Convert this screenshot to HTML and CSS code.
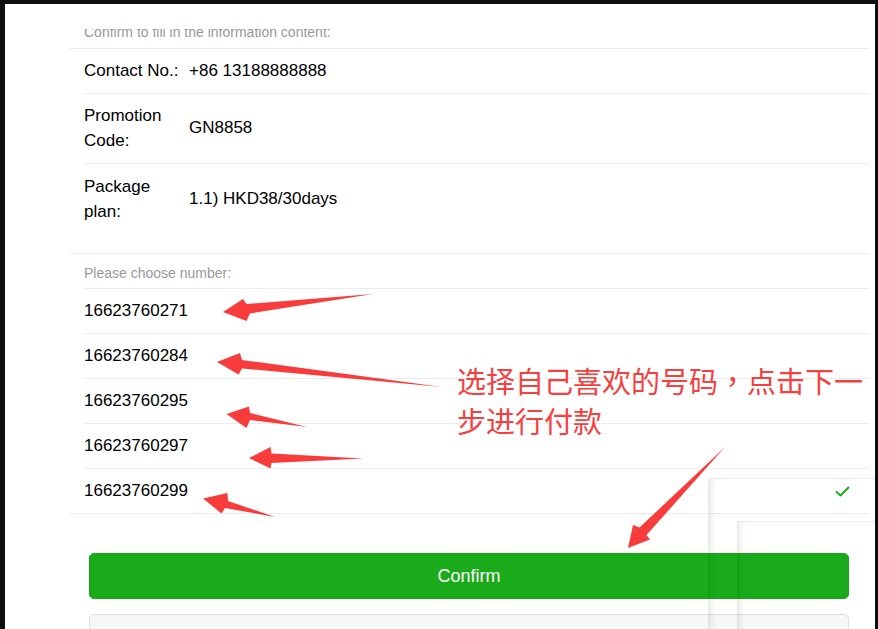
FILE: index.html
```html
<!DOCTYPE html>
<html lang="en">
<head>
<meta charset="utf-8">
<title>Confirm</title>
<link rel="stylesheet" href="styles.css">
</head>
<body>
<div class="page">
  <div class="form">
    <div class="head-clip"><p class="head-title">Confirm to fill in the information content:</p></div>
    <div class="cells">
      <div class="cell"><div class="label">Contact No.:</div><div class="value">+86 13188888888</div></div>
      <div class="cell cell-multi"><div class="label">Promotion Code:</div><div class="value">GN8858</div></div>
      <div class="cell cell-multi cell-tall"><div class="label">Package plan:</div><div class="value">1.1) HKD38/30days</div></div>
    </div>
    <p class="cells-title">Please choose number:</p>
    <div class="cells cells-open">
      <div class="cell"><div class="value">16623760271</div></div>
      <div class="cell"><div class="value">16623760284</div></div>
      <div class="cell"><div class="value">16623760295</div></div>
      <div class="cell"><div class="value">16623760297</div></div>
      <div class="cell"><div class="value">16623760299</div></div>
    </div>
    <div class="btn-area">
      <button class="btn btn-primary" type="button">Confirm</button>
      <button class="btn btn-default" type="button">Cancel</button>
    </div>
  </div>
  <div class="panel panel-1"></div>
  <div class="panel panel-2"></div>
</div>
<svg class="marks" viewBox="0 0 878 629" width="878" height="629" aria-hidden="true">
  <g class="arrow">
    <polygon points="223,312 243,299 246.5,304 373,294 250,313.5 246.5,321"/>
    <polygon points="217,362 240,353 242,360 442,387 242,368.5 238.5,374.5"/>
    <polygon points="226.5,414 249,406.5 250,413 307,427 250,420 246.5,428"/>
    <polygon points="249,458 270.5,447 271.5,453.5 363,458.5 271.5,463 270.5,468.5"/>
    <polygon points="203,498.5 227.5,493 228,501 275,517 225,508 221.5,513.5"/>
    <polygon points="628,548 633,525 639.5,527.5 725,447 646.5,535 650,539.5"/>
  </g>
  <polyline class="check" points="836,491.5 840.5,495.5 849,487"/>
</svg>
<p class="note">选择自己喜欢的号码<span class="punct">，</span>点击下一<br>步进行付款</p>
</body>
</html>
```

FILE: styles.css
```css
html, body {
  margin: 0;
  padding: 0;
  background: #0e0e0e;
  height: 629px;
  overflow: hidden;
}

body {
  position: relative;
  font-family: "Liberation Sans", Arial, sans-serif;
  color: #000;
}

.page {
  position: relative;
  margin: 4px 3px 0 5px;
  height: 625px;
  background: #fff;
  overflow: hidden;
}

.form {
  margin-left: 64px;
  width: 800px;
}

.head-clip {
  margin-top: 25px;
  height: 19px;
  overflow: hidden;
  padding-left: 15px;
}

.head-title {
  margin: -7px 0 0;
  font-size: 14px;
  line-height: 20px;
  color: #999;
}

.cells {
  border-top: 1px solid #ececec;
  border-bottom: 1px solid #ececec;
}

.cell {
  display: flex;
  align-items: center;
  margin-left: 15px;
  padding: 10px 15px 10px 0;
  font-size: 17px;
  line-height: 24px;
}

.cell + .cell {
  border-top: 1px solid #ececec;
}

.cell-multi {
  padding-top: 9px;
}

.cell-multi .label {
  line-height: 25px;
}

.cell-tall {
  padding-top: 10px;
  padding-bottom: 29px;
}

.label {
  width: 105px;
  flex: none;
}

.value {
  flex: 1;
}

.cells-title {
  margin: 0;
  padding: 9px 15px 5px;
  font-size: 14px;
  line-height: 20px;
  color: #999;
}

.cells-open {
  border-top: none;
}

.cells-open .cell:first-child {
  border-top: 1px solid #ececec;
}

.btn-area {
  margin: 39px 20px 0;
  display: flex;
  flex-direction: column;
  gap: 15px;
}

.btn {
  display: block;
  width: 100%;
  height: 46px;
  box-sizing: border-box;
  padding: 0;
  border-radius: 5px;
  font-family: "Liberation Sans", Arial, sans-serif;
  font-size: 18px;
  line-height: 44px;
}

.btn-primary {
  background: #1aab1b;
  border: 1px solid #1aa51a;
  color: #fff;
}

.btn-default {
  background: #f7f7f7;
  border: 1px solid #dedede;
  color: #000;
}

.panel {
  position: absolute;
  right: 0;
  bottom: 0;
  border-top: 1px solid #ececec;
  background: linear-gradient(to right, rgba(0, 0, 0, 0.09), rgba(0, 0, 0, 0.03) 4px, rgba(0, 0, 0, 0) 9px);
}

.panel-1 {
  left: 703px;
  top: 474px;
}

.panel-2 {
  left: 732px;
  top: 517px;
}

.marks {
  position: absolute;
  left: 0;
  top: 0;
  pointer-events: none;
}

.arrow polygon {
  fill: #f83b3b;
}

.check {
  fill: none;
  stroke: #1aad19;
  stroke-width: 2;
}

.note {
  position: absolute;
  left: 457px;
  top: 360px;
  margin: 0;
  font-family: "Noto Sans CJK SC", "Noto Sans", sans-serif;
  font-size: 29px;
  line-height: 40px;
  color: #f5403f;
}

.punct {
  font-family: "Noto Sans CJK TC", "Noto Sans CJK SC", sans-serif;
}
```
